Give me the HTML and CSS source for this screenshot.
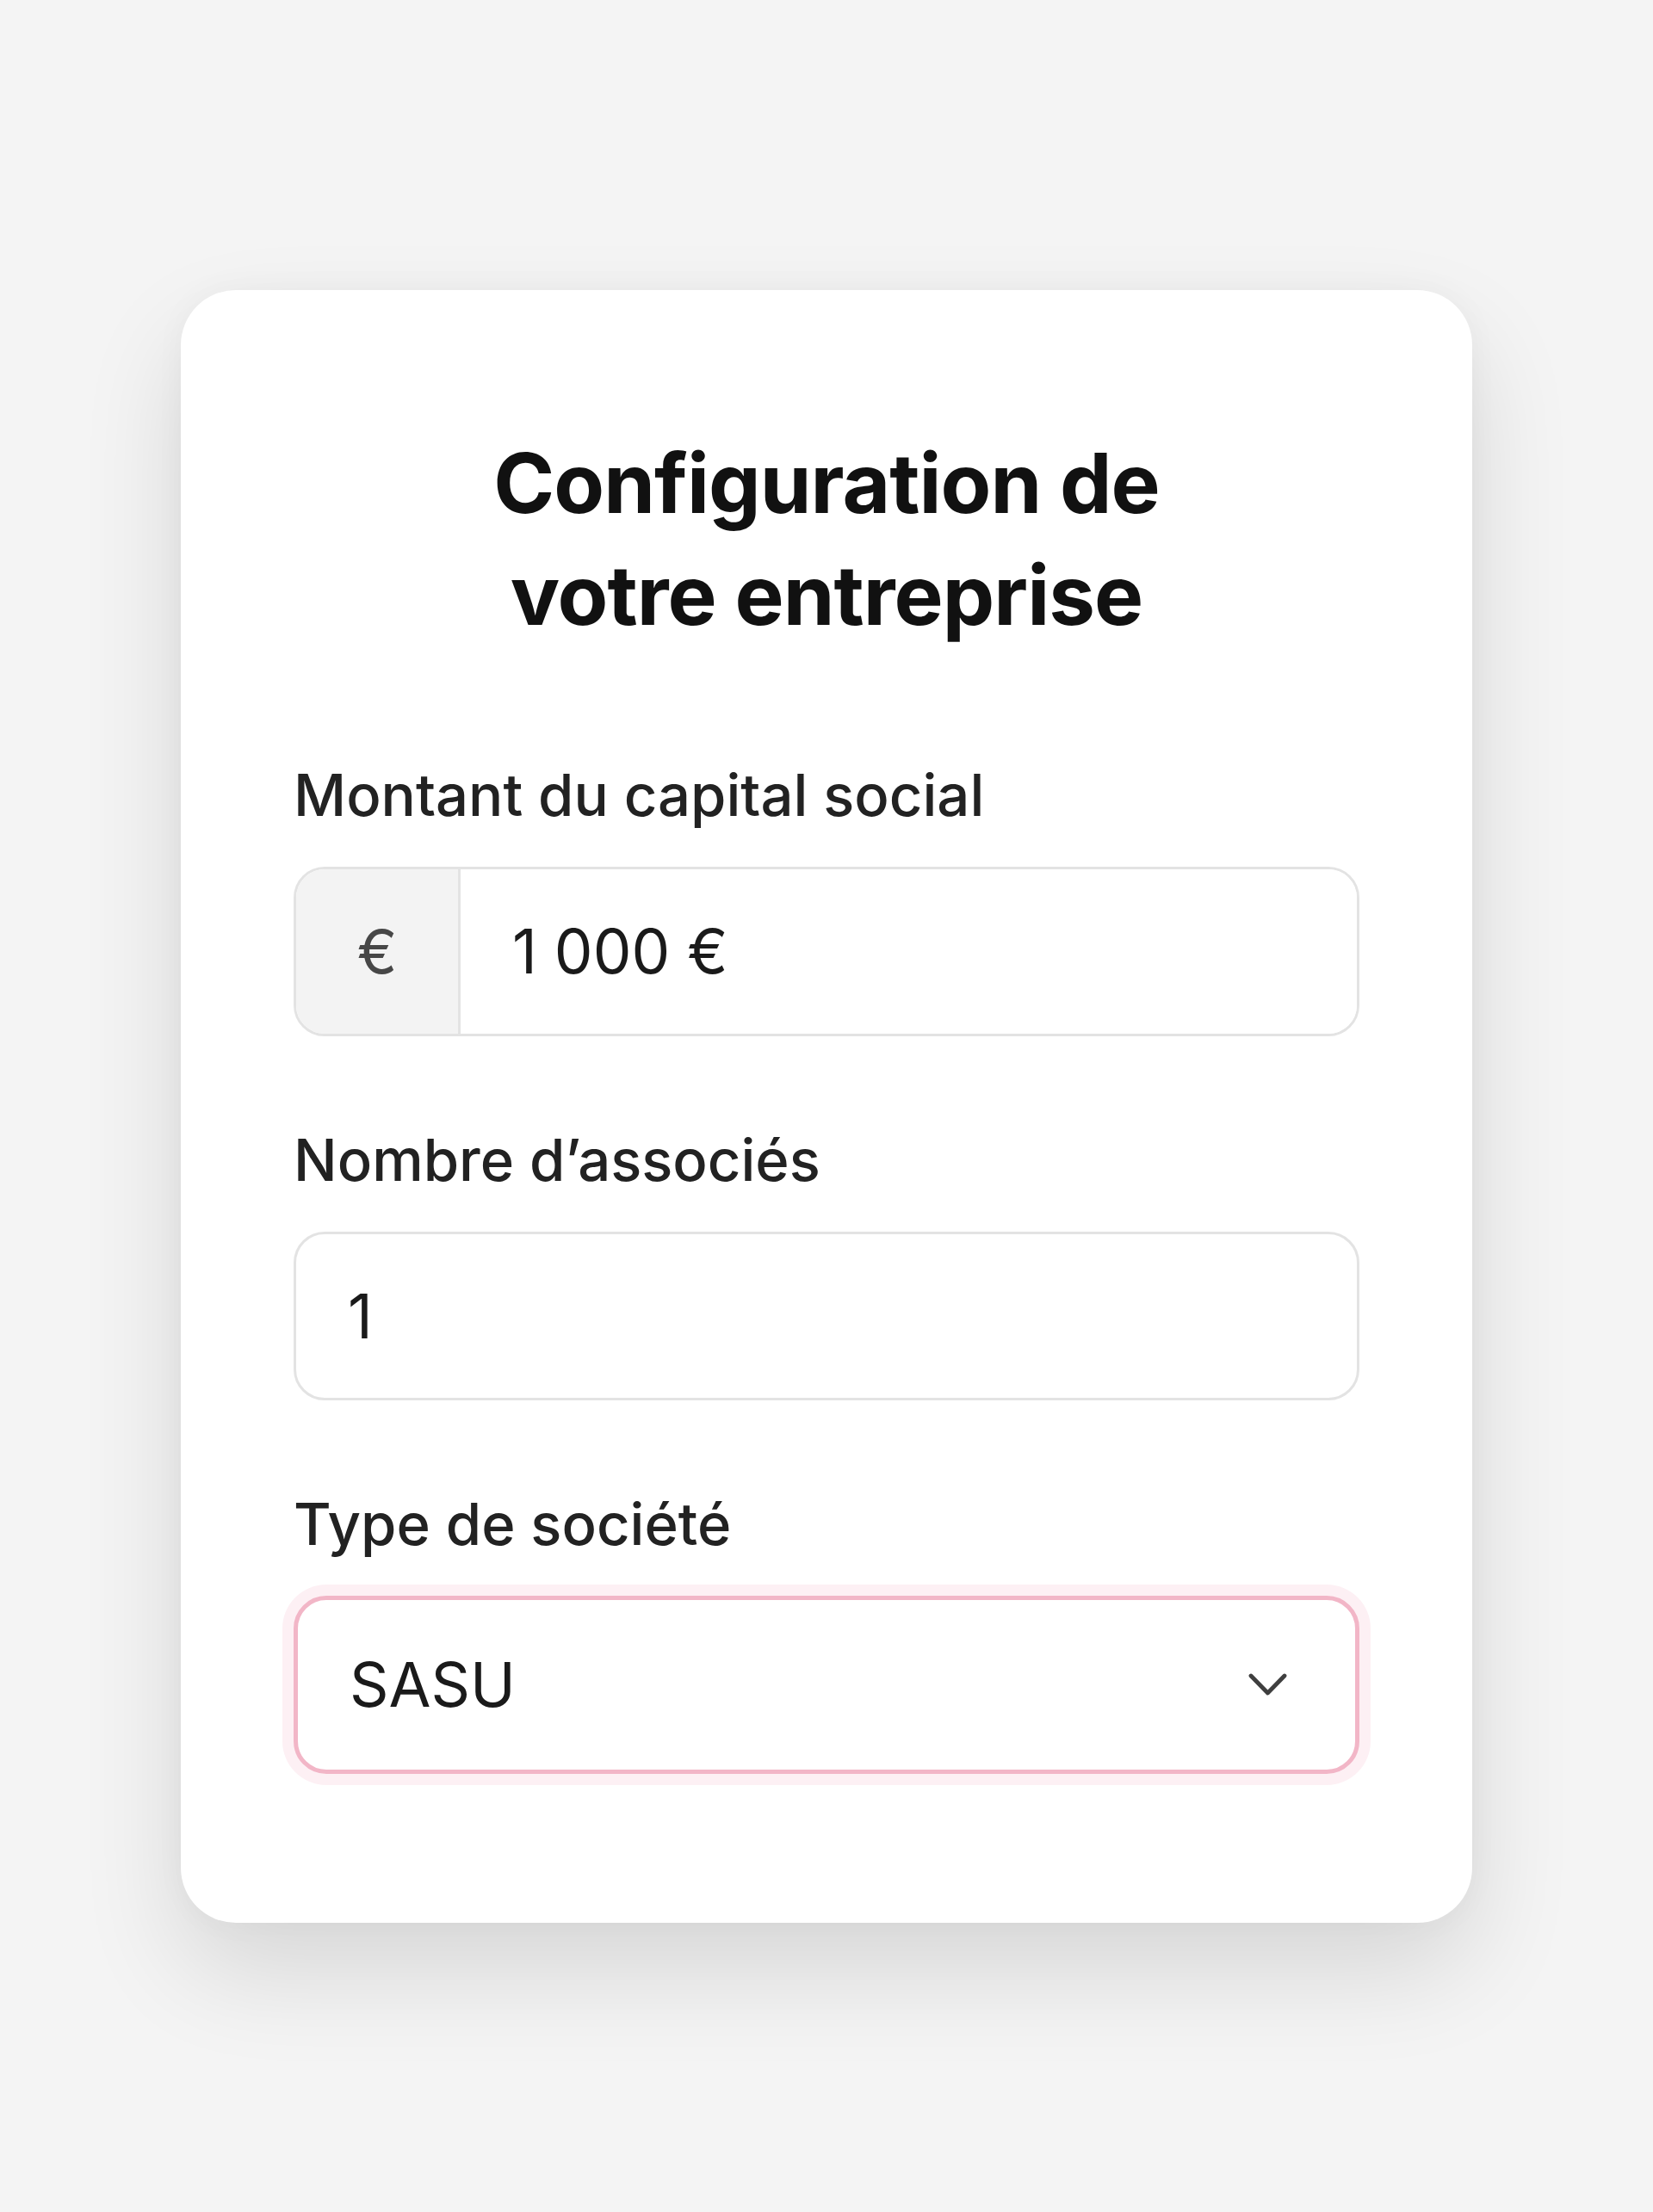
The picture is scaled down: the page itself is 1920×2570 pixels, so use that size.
FILE: index.html
```html
<!DOCTYPE html>
<html lang="fr">
<head>
  <meta charset="UTF-8" />
  <meta name="viewport" content="width=device-width, initial-scale=1.0"/>
  <title>Configuration de votre entreprise</title>
  <link rel="stylesheet" href="styles.css">
</head>
<body>
  <main class="page">
    <section class="card">
      <h1 class="card-title">Configuration de<br>votre entreprise</h1>

      <div class="field">
        <label class="field-label" for="capital">Montant du capital social</label>
        <div class="input-group">
          <span class="input-addon">€</span>
          <input class="input input-grouped" id="capital" type="text" value="1&nbsp;000&nbsp;€">
        </div>
      </div>

      <div class="field">
        <label class="field-label" for="associes">Nombre d’associés</label>
        <input class="input input-box" id="associes" type="text" value="1">
      </div>

      <div class="field">
        <label class="field-label" for="type">Type de société</label>
        <div class="select-wrap">
          <select class="input select" id="type">
            <option>SASU</option>
            <option>SAS</option>
            <option>SARL</option>
            <option>EURL</option>
          </select>
          <svg class="select-chevron" width="45" height="27" viewBox="0 0 45 27" fill="none">
            <polyline points="3,3 22.5,23 42,3" stroke="#3f3f3f" stroke-width="4.8" stroke-linecap="round" stroke-linejoin="round"/>
          </svg>
        </div>
      </div>
    </section>
  </main>
</body>
</html>
```

FILE: styles.css
```css
:root {
  --bg-color: #f4f4f4;
  --card-bg: #ffffff;
  --title-color: #111111;
  --text-color: #222222;
  --border-color: #e3e3e3;
  --addon-bg: #f3f3f3;
  --focus-border: #f2b6c7;
  --focus-ring: #fdf0f4;
}

* {
  box-sizing: border-box;
}

body {
  margin: 0;
  background: var(--bg-color);
  font-family: Inter, 'Noto Sans', sans-serif;
  color: var(--text-color);
}

.page {
  min-height: 100vh;
  display: flex;
  align-items: center;
  justify-content: center;
}

.card {
  width: 1500px;
  padding: 159px 131px 173px;
  background: var(--card-bg);
  border-radius: 64px;
  box-shadow: 0 55px 120px rgba(0, 0, 0, 0.12), 0 0 36px rgba(0, 0, 0, 0.035);
}

.card-title {
  margin: 0 0 125px;
  text-align: center;
  font-size: 96px;
  line-height: 130px;
  font-weight: 700;
  letter-spacing: -0.01em;
  color: var(--title-color);
}

.field + .field {
  margin-top: 101px;
}

.field-label {
  display: block;
  margin-bottom: 40px;
  font-size: 67px;
  line-height: 86px;
  font-weight: 500;
  color: var(--text-color);
}

.input {
  display: block;
  width: 100%;
  margin: 0;
  font-family: inherit;
  font-size: 71px;
  color: #1a1a1a;
  background: #fff;
  outline: none;
}

.input-box {
  height: 196px;
  padding: 0 60px;
  border: 3px solid var(--border-color);
  border-radius: 36px;
}

.input-group {
  display: flex;
  height: 197px;
  border: 3px solid var(--border-color);
  border-radius: 36px;
  overflow: hidden;
}

.input-addon {
  width: 191px;
  flex: none;
  display: flex;
  align-items: center;
  justify-content: center;
  background: var(--addon-bg);
  border-right: 3px solid var(--border-color);
  font-size: 70px;
  color: #474747;
}

.input-grouped {
  flex: 1;
  height: 100%;
  padding: 0 60px;
  border: none;
}

.select-wrap {
  position: relative;
}

.select {
  height: 207px;
  padding: 0 60px;
  border: 5px solid var(--focus-border);
  border-radius: 38px;
  box-shadow: 0 0 0 13px var(--focus-ring);
  appearance: none;
  -webkit-appearance: none;
}

.select-chevron {
  position: absolute;
  right: 84px;
  top: 90px;
  pointer-events: none;
}
```
